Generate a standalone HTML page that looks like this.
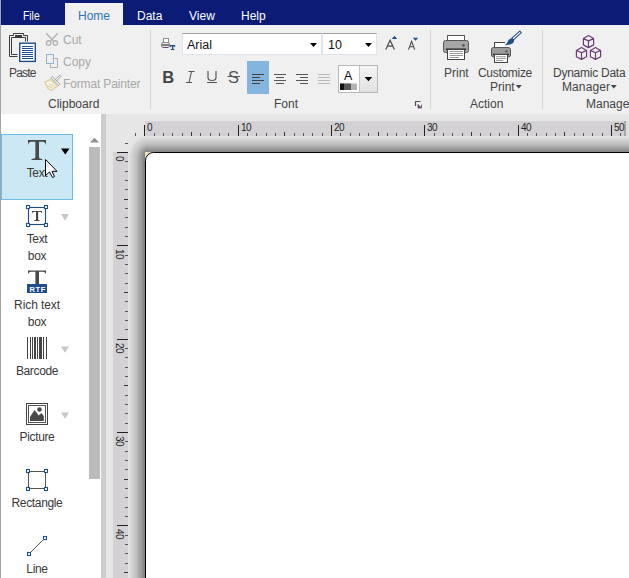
<!DOCTYPE html>
<html><head><meta charset="utf-8">
<style>
*{box-sizing:border-box}
html,body{margin:0;padding:0}
body{width:629px;height:578px;overflow:hidden;position:relative;background:#fff;font-family:"Liberation Sans",sans-serif;color:#444}
.a{position:absolute}
.t{position:absolute;white-space:nowrap;line-height:12px;font-size:12px}
.tab{color:#fff;top:10px}
.sep{position:absolute;background:#d6d6d6;width:1px}
.dis{color:#a8a8a8}
.pl{font-size:12px;letter-spacing:-0.35px;color:#383838;text-align:center;left:0;width:74px}
#rk i{position:absolute;display:block;width:1px;background:#555}
#rk b{position:absolute;display:block;font-weight:normal;font-size:10px;line-height:10px;letter-spacing:-0.6px;color:#222;white-space:nowrap}
#rk b.v{transform:rotate(90deg);transform-origin:0 0}
svg{position:absolute;left:0;top:0}
</style></head><body>
<!-- header -->
<div class="a" style="left:0;top:0;width:629px;height:25px;background:#0c1b76"></div>
<div class="a" style="left:65px;top:3px;width:58px;height:23px;background:#f0f0f0"></div>
<div class="t tab" style="left:23px;transform:scaleX(0.86);transform-origin:0 0">File</div>
<div class="t tab" style="left:78px;color:#2e73b8">Home</div>
<div class="t tab" style="left:137px">Data</div>
<div class="t tab" style="left:189px">View</div>
<div class="t tab" style="left:241px">Help</div>

<!-- ribbon -->
<div class="a" style="left:0;top:25px;width:629px;height:89px;background:#f0f0f0"></div>
<div class="sep" style="left:150px;top:30px;height:79px"></div>
<div class="sep" style="left:430px;top:30px;height:79px"></div>
<div class="sep" style="left:542px;top:30px;height:79px"></div>

<div class="t" style="left:9px;top:67px;letter-spacing:-0.8px">Paste</div>
<div class="t dis" style="left:63px;top:34px">Cut</div>
<div class="t dis" style="left:63px;top:56px">Copy</div>
<div class="t dis" style="left:63px;top:78px;letter-spacing:-0.15px">Format Painter</div>
<div class="t" style="left:48px;top:98px">Clipboard</div>
<div class="t" style="left:274px;top:98px">Font</div>
<div class="t" style="left:444px;top:67px">Print</div>
<div class="t" style="left:478px;top:67px;letter-spacing:-0.3px">Customize</div>
<div class="t" style="left:490px;top:81px">Print</div>
<div class="t" style="left:470px;top:98px">Action</div>
<div class="t" style="left:553px;top:67px;letter-spacing:-0.25px">Dynamic Data</div>
<div class="t" style="left:562px;top:81px;letter-spacing:0.1px">Manager</div>
<div class="t" style="left:586px;top:98px">Manager</div>

<!-- font combos -->
<div class="a" style="left:182px;top:33px;width:140px;height:22px;background:#fff;border:1px solid #dfe5ec;border-top-color:#a0a0a0"></div>
<div class="t" style="left:187px;top:39px;font-size:12.5px;color:#111">Arial</div>
<div class="a" style="left:322px;top:33px;width:55px;height:22px;background:#fff;border:1px solid #dfe5ec;border-top-color:#a0a0a0"></div>
<div class="t" style="left:328px;top:39px;font-size:12.5px;color:#111">10</div>
<!-- align highlight -->
<div class="a" style="left:247px;top:61px;width:22px;height:33px;background:#84b5de"></div>
<!-- color button -->
<div class="a" style="left:338px;top:65px;width:40px;height:28px;border:1px solid #b8b8b8;background:linear-gradient(#f4f4f4,#e2e2e2)"></div>
<div class="a" style="left:339px;top:66px;width:21px;height:26px;background:#fff;border-right:1px solid #c4c4c4"></div>

<!-- left panel -->
<div class="a" style="left:0;top:0;width:1px;height:578px;background:#a3a3a3"></div>
<div class="a" style="left:1px;top:114px;width:100px;height:464px;background:#fff"></div>
<div class="a" style="left:1px;top:134px;width:72px;height:66px;background:#cce8f5;border:1px solid #6dbce8"></div>
<div class="t pl" style="top:167px">Text</div>
<div class="t pl" style="top:233px">Text</div>
<div class="t pl" style="top:250px">box</div>
<div class="t pl" style="top:299px;letter-spacing:-0.1px">Rich text</div>
<div class="t pl" style="top:316px">box</div>
<div class="t pl" style="top:365px">Barcode</div>
<div class="t pl" style="top:431px">Picture</div>
<div class="t pl" style="top:497px">Rectangle</div>
<div class="t pl" style="top:563px">Line</div>
<!-- scrollbar -->
<div class="a" style="left:89px;top:147px;width:11px;height:332px;background:#bbbbbb"></div>

<!-- designer -->
<div class="a" style="left:101px;top:114px;width:528px;height:464px;background:#e6e6e6"></div>
<div class="a" style="left:101px;top:114px;width:5px;height:464px;background:#cdcdcd"></div>
<!-- shadow strips -->
<div class="a" style="left:128px;top:155px;width:17px;height:423px;background:linear-gradient(to right,#e6e6e6,#bfbfbf 50%,#7e7e7e)"></div>
<div class="a" style="left:148px;top:136px;width:481px;height:16px;background:linear-gradient(to bottom,#e6e6e6,#bfbfbf 50%,#838383)"></div>
<div class="a" style="left:128px;top:136px;width:20px;height:19px;background:radial-gradient(circle at 20px 19px,#808080 3px,#bfbfbf 11px,#e6e6e6 19.5px)"></div>
<!-- ruler bgs -->
<div class="a" style="left:145px;top:121px;width:484px;height:15px;background:#d3d1d4"></div>
<div class="a" style="left:113px;top:152px;width:15px;height:426px;background:#d3d1d4"></div>
<div class="a" style="left:624px;top:121px;width:2px;height:15px;background:#a9a9a9"></div>
<div class="a" style="left:626px;top:121px;width:3px;height:15px;background:#dedede"></div>
<!-- label -->
<div class="a" style="left:145px;top:152px;width:9px;height:9px;background:#efe1be"></div>
<div class="a" style="left:145px;top:152px;width:500px;height:440px;background:#fff;border:1px solid #000;border-left-width:1.5px;border-radius:8.5px 0 0 0"></div>
<div id="rk">
<i style="left:135px;top:133px;height:3px"></i>
<i style="left:144px;top:125px;height:11px;background:#222"></i>
<b style="left:147px;top:123px">0</b>
<i style="left:154px;top:133px;height:3px"></i>
<i style="left:163px;top:133px;height:3px"></i>
<i style="left:172px;top:133px;height:3px"></i>
<i style="left:182px;top:133px;height:3px"></i>
<i style="left:191px;top:132px;height:4px;background:#333"></i>
<i style="left:200px;top:133px;height:3px"></i>
<i style="left:210px;top:133px;height:3px"></i>
<i style="left:219px;top:133px;height:3px"></i>
<i style="left:228px;top:133px;height:3px"></i>
<i style="left:238px;top:125px;height:11px;background:#222"></i>
<b style="left:241px;top:123px">10</b>
<i style="left:247px;top:133px;height:3px"></i>
<i style="left:256px;top:133px;height:3px"></i>
<i style="left:266px;top:133px;height:3px"></i>
<i style="left:275px;top:133px;height:3px"></i>
<i style="left:284px;top:132px;height:4px;background:#333"></i>
<i style="left:294px;top:133px;height:3px"></i>
<i style="left:303px;top:133px;height:3px"></i>
<i style="left:312px;top:133px;height:3px"></i>
<i style="left:322px;top:133px;height:3px"></i>
<i style="left:331px;top:125px;height:11px;background:#222"></i>
<b style="left:334px;top:123px">20</b>
<i style="left:340px;top:133px;height:3px"></i>
<i style="left:350px;top:133px;height:3px"></i>
<i style="left:359px;top:133px;height:3px"></i>
<i style="left:368px;top:133px;height:3px"></i>
<i style="left:378px;top:132px;height:4px;background:#333"></i>
<i style="left:387px;top:133px;height:3px"></i>
<i style="left:396px;top:133px;height:3px"></i>
<i style="left:406px;top:133px;height:3px"></i>
<i style="left:415px;top:133px;height:3px"></i>
<i style="left:424px;top:125px;height:11px;background:#222"></i>
<b style="left:427px;top:123px">30</b>
<i style="left:434px;top:133px;height:3px"></i>
<i style="left:443px;top:133px;height:3px"></i>
<i style="left:452px;top:133px;height:3px"></i>
<i style="left:462px;top:133px;height:3px"></i>
<i style="left:471px;top:132px;height:4px;background:#333"></i>
<i style="left:480px;top:133px;height:3px"></i>
<i style="left:490px;top:133px;height:3px"></i>
<i style="left:499px;top:133px;height:3px"></i>
<i style="left:508px;top:133px;height:3px"></i>
<i style="left:518px;top:125px;height:11px;background:#222"></i>
<b style="left:521px;top:123px">40</b>
<i style="left:527px;top:133px;height:3px"></i>
<i style="left:536px;top:133px;height:3px"></i>
<i style="left:546px;top:133px;height:3px"></i>
<i style="left:555px;top:133px;height:3px"></i>
<i style="left:564px;top:132px;height:4px;background:#333"></i>
<i style="left:574px;top:133px;height:3px"></i>
<i style="left:583px;top:133px;height:3px"></i>
<i style="left:592px;top:133px;height:3px"></i>
<i style="left:602px;top:133px;height:3px"></i>
<i style="left:611px;top:125px;height:11px;background:#222"></i>
<b style="left:614px;top:123px">50</b>
<i style="left:620px;top:133px;height:3px"></i>
<i style="top:143px;left:125px;width:3px;height:1px"></i>
<i style="top:152px;left:117px;width:11px;height:1px;background:#222"></i>
<b class="v" style="top:156px;left:124px">0</b>
<i style="top:161px;left:125px;width:3px;height:1px"></i>
<i style="top:171px;left:125px;width:3px;height:1px"></i>
<i style="top:180px;left:125px;width:3px;height:1px"></i>
<i style="top:189px;left:125px;width:3px;height:1px"></i>
<i style="top:199px;left:124px;width:4px;height:1px;background:#333"></i>
<i style="top:208px;left:125px;width:3px;height:1px"></i>
<i style="top:217px;left:125px;width:3px;height:1px"></i>
<i style="top:227px;left:125px;width:3px;height:1px"></i>
<i style="top:236px;left:125px;width:3px;height:1px"></i>
<i style="top:245px;left:117px;width:11px;height:1px;background:#222"></i>
<b class="v" style="top:249px;left:124px">10</b>
<i style="top:255px;left:125px;width:3px;height:1px"></i>
<i style="top:264px;left:125px;width:3px;height:1px"></i>
<i style="top:273px;left:125px;width:3px;height:1px"></i>
<i style="top:283px;left:125px;width:3px;height:1px"></i>
<i style="top:292px;left:124px;width:4px;height:1px;background:#333"></i>
<i style="top:301px;left:125px;width:3px;height:1px"></i>
<i style="top:311px;left:125px;width:3px;height:1px"></i>
<i style="top:320px;left:125px;width:3px;height:1px"></i>
<i style="top:329px;left:125px;width:3px;height:1px"></i>
<i style="top:339px;left:117px;width:11px;height:1px;background:#222"></i>
<b class="v" style="top:343px;left:124px">20</b>
<i style="top:348px;left:125px;width:3px;height:1px"></i>
<i style="top:357px;left:125px;width:3px;height:1px"></i>
<i style="top:367px;left:125px;width:3px;height:1px"></i>
<i style="top:376px;left:125px;width:3px;height:1px"></i>
<i style="top:385px;left:124px;width:4px;height:1px;background:#333"></i>
<i style="top:395px;left:125px;width:3px;height:1px"></i>
<i style="top:404px;left:125px;width:3px;height:1px"></i>
<i style="top:413px;left:125px;width:3px;height:1px"></i>
<i style="top:423px;left:125px;width:3px;height:1px"></i>
<i style="top:432px;left:117px;width:11px;height:1px;background:#222"></i>
<b class="v" style="top:436px;left:124px">30</b>
<i style="top:441px;left:125px;width:3px;height:1px"></i>
<i style="top:451px;left:125px;width:3px;height:1px"></i>
<i style="top:460px;left:125px;width:3px;height:1px"></i>
<i style="top:469px;left:125px;width:3px;height:1px"></i>
<i style="top:479px;left:124px;width:4px;height:1px;background:#333"></i>
<i style="top:488px;left:125px;width:3px;height:1px"></i>
<i style="top:497px;left:125px;width:3px;height:1px"></i>
<i style="top:507px;left:125px;width:3px;height:1px"></i>
<i style="top:516px;left:125px;width:3px;height:1px"></i>
<i style="top:525px;left:117px;width:11px;height:1px;background:#222"></i>
<b class="v" style="top:529px;left:124px">40</b>
<i style="top:535px;left:125px;width:3px;height:1px"></i>
<i style="top:544px;left:125px;width:3px;height:1px"></i>
<i style="top:553px;left:125px;width:3px;height:1px"></i>
<i style="top:563px;left:125px;width:3px;height:1px"></i>
<i style="top:572px;left:124px;width:4px;height:1px;background:#333"></i>
</div>

<svg width="629" height="578" viewBox="0 0 629 578">
<!-- Paste -->
<g fill="none" stroke="#3c3c3c" stroke-width="1">
<path d="M17.5,56.5H9.5V35.5H13.5V33.5H23.5V35.5H27.5V41.5"/>
<path d="M17.5,54.5H11.5V37.5H25.5V41.5"/>
</g>
<rect x="15" y="35" width="7" height="2" fill="#3c3c3c"/>
<rect x="19.7" y="43.2" width="15.6" height="18.2" fill="#fff" stroke="#1f4e8d" stroke-width="1.4"/>
<g fill="#1f4e8d"><rect x="22" y="46" width="11" height="1"/><rect x="22" y="48" width="11" height="1"/><rect x="22" y="50" width="11" height="1"/><rect x="22" y="52" width="11" height="1"/><rect x="22" y="54" width="11" height="1"/><rect x="22" y="56" width="11" height="1"/><rect x="22" y="58" width="11" height="1"/></g>
<!-- Cut -->
<g fill="none" stroke="#b4b4b4" stroke-width="1.3">
<path d="M46.2,33.3L53.5,41M57.8,33.3L50.5,41" stroke-width="1.5"/>
<circle cx="48.6" cy="43" r="2.2" stroke-width="1.4"/><circle cx="55.4" cy="43" r="2.2" stroke-width="1.4"/>
</g>
<!-- Copy -->
<rect x="46.5" y="54.5" width="7" height="9" fill="none" stroke="#92b0ca"/>
<path d="M54.5,58.5H57.5V67.5H50.5V64.5" fill="none" stroke="#ababab"/>
<!-- Format painter -->
<path d="M50.8,78L58.5,85.7L60,84.2L52.3,76.5Z" fill="none" stroke="#a6a6a6" stroke-width="1"/>
<path d="M54.5,80.2L59.8,75.2L61,76.4L56,81.6" fill="none" stroke="#a6a6a6" stroke-width="1"/>
<path d="M44.5,82.2L50.3,79.5L57,86.2L51.5,90.3L48.2,88.8Z" fill="none" stroke="#e2cb8a" stroke-width="1.1"/><path d="M47.5,86.2L52.5,87.5M49,84L54,86" stroke="#e2cb8a" stroke-width="0.9"/>

<!-- printer T icon -->
<rect x="163.5" y="38.5" width="5" height="4" fill="#fff" stroke="#8c8c8c"/>
<rect x="161.5" y="42.5" width="8" height="5" rx="1.5" fill="#e6e6e6" stroke="#8c8c8c"/>
<rect x="162" y="44" width="7" height="2" fill="#808080"/>
<path d="M163,47.5H168" stroke="#6a4a6a"/>
<path d="M170,45H175.2V47H174.6Q174.4,46.3 173.6,46.3H173.3V49H174.4V50H170.8V49H171.9V46.3H171.6Q170.8,46.3 170.6,47H170Z" fill="#1f4e8d"/>
<!-- combo arrows -->
<path d="M310,43H317L313.5,47Z" fill="#000"/>
<path d="M365,43H372L368.5,47Z" fill="#000"/>
<!-- grow / shrink -->
<path d="M385.8,49.6L390.1,40.2L394.4,49.6M387.4,46.2H392.8" fill="none" stroke="#4a4a4a" stroke-width="1.2"/>
<path d="M391.8,39H397.2L394.5,35.8Z" fill="#1f4e8d"/>
<path d="M408.5,49.6L411.6,41.4L414.7,49.6M409.7,46.8H413.5" fill="none" stroke="#4a4a4a" stroke-width="1.1"/>
<path d="M412.8,37.8H418.2L415.5,40.8Z" fill="#1f4e8d"/>
<!-- B I U S -->
<text x="162.3" y="82.8" font-size="16.5" font-weight="bold" fill="#444">B</text>
<path d="M188.5,71.5H194.5M186,82.5H192M191.5,71.5L189,82.5" stroke="#555" stroke-width="1.1" fill="none"/>
<path d="M208,71V77.5Q208,80.5 212,80.5Q216,80.5 216,77.5V71M207,82.5H217" stroke="#555" stroke-width="1.2" fill="none"/>
<text x="228" y="82.8" font-size="16" fill="#555" textLength="11" lengthAdjust="spacingAndGlyphs">S</text>
<path d="M227.5,76.5H240" stroke="#555" stroke-width="1"/>
<!-- align icons -->
<g fill="#404040">
<rect x="252" y="74" width="12" height="1"/><rect x="252" y="77" width="8" height="1"/><rect x="252" y="80" width="12" height="1"/><rect x="252" y="83" width="8" height="1"/>
</g>
<g fill="#555">
<rect x="274" y="74" width="12" height="1"/><rect x="276" y="77" width="8" height="1"/><rect x="274" y="80" width="12" height="1"/><rect x="276" y="83" width="8" height="1"/>
<rect x="296" y="74" width="12" height="1"/><rect x="300" y="77" width="8" height="1"/><rect x="296" y="80" width="12" height="1"/><rect x="300" y="83" width="8" height="1"/>
</g>
<g fill="#b8b8b8">
<rect x="318" y="74" width="12" height="1"/><rect x="318" y="77" width="12" height="1"/><rect x="318" y="80" width="12" height="1"/><rect x="318" y="83" width="12" height="1"/>
</g>
<!-- color A -->
<text x="344" y="80.3" font-size="12" fill="#111" textLength="8.3" lengthAdjust="spacingAndGlyphs">A</text>
<rect x="340" y="83.5" width="17" height="6.5" fill="#b4b4b4"/>
<rect x="340" y="83.5" width="4" height="6.5" fill="#111"/><rect x="344" y="83.5" width="7" height="6.5" fill="#5a5656"/>
<path d="M364.7,77H372.2L368.45,81.2Z" fill="#000"/>
<!-- dialog launcher -->
<path d="M415.5,106V101.5H420.5" fill="none" stroke="#5e4a62" stroke-width="1.2"/>
<path d="M418,104.5L421.5,108H418Z M421.5,104.5V108" fill="#5e4a62" stroke="#5e4a62" stroke-width="0.8"/>

<!-- Print icon -->
<rect x="447.5" y="35.5" width="17" height="5" fill="#fff" stroke="#555"/>
<rect x="443.5" y="40.5" width="25" height="12" rx="2" fill="#a6a6a6" stroke="#555"/>
<circle cx="463.4" cy="45.4" r="1.3" fill="#555"/>
<path d="M446,49.3H466" stroke="#111" stroke-width="1.5"/>
<rect x="447.5" y="49.5" width="17" height="10" fill="#fff" stroke="#444"/>
<g fill="#9a9a9a"><rect x="449.5" y="51" width="13.5" height="1"/><rect x="449.5" y="53" width="13.5" height="1"/><rect x="449.5" y="55" width="13.5" height="1"/><rect x="449.5" y="57" width="9.5" height="1"/></g>
<!-- Customize print icon -->
<path d="M505,42.5H494.5V47.5" fill="#fff" stroke="#444"/>
<rect x="494.5" y="42.5" width="10" height="5" fill="#fff"/>
<path d="M505,42.5H494.5V47" fill="none" stroke="#444"/>
<rect x="491.5" y="47.5" width="19" height="9.5" rx="2" fill="#9c9c9c" stroke="#555"/>
<circle cx="506.5" cy="51.4" r="1.2" fill="#555"/>
<path d="M493,54.5H509" stroke="#111" stroke-width="1.3"/>
<rect x="494.5" y="54.5" width="13" height="8" fill="#fff" stroke="#444"/>
<g fill="#9a9a9a"><rect x="496" y="56.2" width="10" height="1"/><rect x="496" y="58.1" width="10" height="1"/><rect x="496" y="60" width="7" height="1"/></g>
<path d="M519.8,31.2L521.3,32.7L513.5,39.8L511.8,38.2Z" fill="#fff" stroke="#1f4e8d" stroke-width="1.1" stroke-linejoin="round"/>
<path d="M504.5,45.2Q507,44 507.8,41.5Q508.8,38.6 511.5,38.2Q514,38.8 514.2,40.8Q513.6,43.8 509.8,44.6Q507,45.2 504.5,45.2Z" fill="#1f4e8d"/>
<!-- dropdown small arrows -->
<path d="M515.8,85H521.8L518.8,88.6Z" fill="#444"/>
<path d="M610.8,85H616.8L613.8,88.6Z" fill="#444"/>
<!-- cubes -->
<g fill="none" stroke="#6b3e78" stroke-width="1.2" stroke-linejoin="round">
<path d="M588.5,35.6L593.6,38.6V44.900000000000006L588.5,47.6L583.4,44.900000000000006V38.6Z M583.4,38.6L588.5,40.9L593.6,38.6 M588.5,40.9V47.6"/>
<path d="M581.5,47.4L586.6,50.4V56.7L581.5,59.4L576.4,56.7V50.4Z M576.4,50.4L581.5,52.699999999999996L586.6,50.4 M581.5,52.699999999999996V59.4"/>
<path d="M595.5,47.4L600.6,50.4V56.7L595.5,59.4L590.4,56.7V50.4Z M590.4,50.4L595.5,52.699999999999996L600.6,50.4 M595.5,52.699999999999996V59.4"/>
</g>
<!-- Left panel icons -->
<path d="M28,140H46V145.0Q44.99,141.7 42.99,141.7H39.0V157.0Q39.0,158.8 42.2,159.0V160H31.49V159.0Q35.4,158.8 35.4,157.0V141.7H31.01Q29.01,141.7 28,145.0Z" fill="#484848"/>
<path d="M61,148.5H69.5L65.25,154.5Z" fill="#000"/>
<!-- text box -->
<rect x="28.5" y="207.5" width="17" height="17" fill="none" stroke="#1f4e8d" stroke-width="1.1"/>
<g fill="#fff" stroke="#1f4e8d" stroke-width="1.1">
<rect x="26.5" y="205.5" width="3" height="3"/><rect x="44.5" y="205.5" width="3" height="3"/>
<rect x="26.5" y="223.5" width="3" height="3"/><rect x="44.5" y="223.5" width="3" height="3"/>
</g>
<path d="M32,211H42V213.5Q41.44,211.85 40.33,211.85H38.11V219.5Q38.11,220.4 39.89,220.5V221H33.94V220.5Q36.11,220.4 36.11,219.5V211.85H33.67Q32.56,211.85 32,213.5Z" fill="#3c3c3c"/>
<path d="M61,214H69L65,220.5Z" fill="#c8c8c8"/>
<!-- RTF -->
<path d="M28,270.5H46V273.88Q44.99,271.65 42.99,271.65H39.0V284.0H35.4V271.65H31.01Q29.01,271.65 28,273.88Z" fill="#484848"/>
<rect x="27" y="284" width="20" height="9" fill="#1f4e8d"/>
<text x="29.5" y="291.5" font-size="7.5" font-weight="bold" fill="#fff" letter-spacing="0.6">RTF</text>
<!-- barcode -->
<g fill="#444">
<rect x="27" y="337" width="1" height="22"/><rect x="30" y="337" width="1" height="22"/><rect x="32" y="337" width="1" height="22"/><rect x="34" y="337" width="2" height="22"/><rect x="37" y="337" width="1" height="22"/><rect x="39" y="337" width="3" height="22"/><rect x="43" y="337" width="1" height="22"/><rect x="46" y="337" width="1" height="22"/>
</g>
<path d="M61,346.5H69L65,352.8Z" fill="#c8c8c8"/>
<!-- picture -->
<rect x="26.5" y="403.5" width="21" height="21" fill="#fff" stroke="#444"/>
<rect x="28.5" y="405.5" width="17" height="17" fill="#fff" stroke="#555"/>
<path d="M30,421V417L34.6,410L38.8,415.5L41.3,413L43.8,416V421Z" fill="#484848"/>
<circle cx="39.5" cy="409.5" r="2.3" fill="#484848"/>
<path d="M61,412.5H69L65,418.8Z" fill="#c8c8c8"/>
<!-- rectangle -->
<rect x="28.5" y="471.5" width="17" height="17" fill="none" stroke="#555" stroke-width="1"/>
<g fill="#fff" stroke="#1f4e8d" stroke-width="1.1">
<rect x="26.5" y="469.5" width="3" height="3"/><rect x="44.5" y="469.5" width="3" height="3"/>
<rect x="26.5" y="487.5" width="3" height="3"/><rect x="44.5" y="487.5" width="3" height="3"/>
</g>
<!-- line -->
<path d="M30.5,552.5L43.5,539.5" stroke="#555" stroke-width="1"/>
<g fill="#fff" stroke="#1f4e8d" stroke-width="1.1">
<rect x="27.5" y="552.5" width="3" height="3"/><rect x="43.5" y="536.5" width="3" height="3"/>
</g>
<!-- scroll arrow -->
<path d="M90,142.5H99L94.5,137.8Z" fill="#8e8e8e"/>
<!-- cursor -->
<path d="M45.5,159.5V175.5L49.5,172L52.5,177.5L54.5,176.5L52,171.3H57Z" fill="#fff" stroke="#000" stroke-width="1" stroke-linejoin="miter"/>
</svg>
</body></html>
